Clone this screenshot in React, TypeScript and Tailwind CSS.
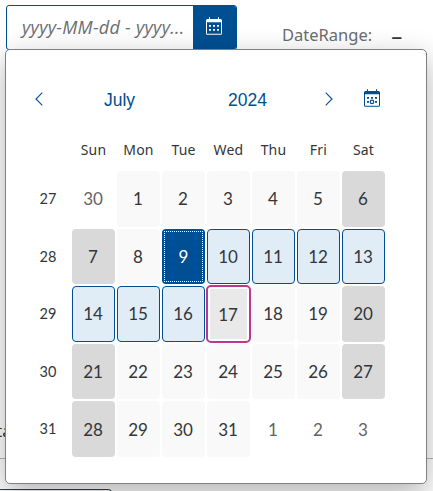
import React from "react";

const days = ["Sun", "Mon", "Tue", "Wed", "Thu", "Fri", "Sat"];
const weeks = [
  { no: 27, dates: [30, 1, 2, 3, 4, 5, 6] },
  { no: 28, dates: [7, 8, 9, 10, 11, 12, 13] },
  { no: 29, dates: [14, 15, 16, 17, 18, 19, 20] },
  { no: 30, dates: [21, 22, 23, 24, 25, 26, 27] },
  { no: 31, dates: [28, 29, 30, 31, 1, 2, 3] },
];

function DayCell({ date, week, col }: { date: number; week: number; col: number }) {
  const other = (week === 0 && date > 20) || (week === 4 && date < 10);
  const base = "flex items-center justify-center rounded-[4px] pr-px text-[17px] leading-none ";
  if (other) return <div className={base + "text-[#636363]"}>{date}</div>;
  if (date === 9)
    return (
      <div className="flex rounded-[4px] bg-[#004f93] p-[2px] text-[17px] leading-none text-white">
        <span className="flex flex-1 items-center justify-center border border-dotted border-white">9</span>
      </div>
    );
  if (date === 17)
    return (
      <div className="-m-px flex rounded-[5px] border-2 border-[#c0368c] bg-white p-[2px] text-[17px] leading-none">
        <span className="flex flex-1 items-center justify-center bg-[#e9e9e9] pt-[2px] pr-px">17</span>
      </div>
    );
  if (date > 9 && date < 17) return <div className={base + "border border-[#004f93] bg-[#e0edf7]"}>{date}</div>;
  return <div className={base + (col === 0 || col === 6 ? "bg-[#d9d9d9]" : "bg-[#f9f9f9]")}>{date}</div>;
}

function CalendarIcon({ today = false }: { today?: boolean }) {
  return (
    <svg width="16" height="18" viewBox="0 0 16 18" fill="currentColor">
      <path fillRule="evenodd" d="M1.500 2H3V.300h1V2h8V.300h1V2h1.500A1.500 1.500 0 0 1 16 3.500v13a1.300 1.300 0 0 1-1.300 1.300H1.300A1.300 1.300 0 0 1 0 16.500v-13A1.500 1.500 0 0 1 1.500 2M1 5.200V16.700H15V5.200Z" />
      <path d="M3 8h2v1.700H3zM7 8h2v1.700H7zM11 8h2v1.700h-2zM3 12h2v1.700H3zM11 12h2v1.700h-2z" />
      {today ? <circle cx="8" cy="12.900" r="1.700" fill="none" stroke="currentColor" strokeWidth="1.200" /> : <path d="M7 12h2v1.700H7z" />}
    </svg>
  );
}

function Chevron({ right = false }: { right?: boolean }) {
  return (
    <svg width="8" height="14" viewBox="0 0 8 14" fill="none" stroke="currentColor" strokeWidth="1.100">
      <path d={right ? "M.700 .600 7 7 .700 13.400" : "M7.300 .600 1 7l6.300 6.400"} />
    </svg>
  );
}

export default function App() {
  return (
    <main className="relative h-[491px] w-[433px] overflow-hidden bg-white font-['Lato','Liberation_Sans',sans-serif] text-[#32363a]">
      <div className="flex h-[50px] pt-[5px] pl-[6px]">
        <div className="flex h-[45px] w-[231px] overflow-hidden rounded-[3px] border border-[#004f93]">
          <div className="flex-1 pt-[9px] pl-[15px] font-['Open_Sans',sans-serif] text-[18px] leading-[24px] tracking-[0.280px] whitespace-nowrap text-[#6a6d70] italic">yyyy-MM-dd - yyyy...</div>
          <div className="flex w-[43px] items-center justify-center bg-[#004f93] pr-px pb-[3px] text-white"><CalendarIcon /></div>
        </div>
        <div className="ml-[45px] flex pt-[19px] font-['Noto_Sans',sans-serif] text-[16.500px] leading-[22px] text-[#6a6d70]">
          <span>DateRange:</span><span className="ml-[19px] text-[22px] text-[#32363a]">–</span>
        </div>
      </div>
      <div className="h-[409px] border-b border-[#b7b7b7] pt-[370px] font-['Noto_Sans',sans-serif] text-[17px] leading-[22px]"><span className="-ml-[4px]">ta</span></div>
      <div className="mt-[30px] h-[20px] w-[112px] rounded-tr-[4px] border-t border-r border-[#004f93] bg-white" />

      <section className="absolute top-[49px] left-[5px] h-[435px] w-[422px] rounded-[5px] border border-[#808080] bg-white shadow-[0_10px_30px_rgba(0,0,0,0.300)]">
        <header className="flex h-[88px] pt-[9px] font-['Liberation_Sans',sans-serif] text-[17.500px] text-[#004f93]">
          <div className="flex w-[65px] items-center justify-center"><Chevron /></div>
          <span className="flex w-[97px] items-center justify-center pt-[4px]">July</span>
          <span className="ml-[34px] flex w-[91px] items-center justify-center pt-[4px]">2024</span>
          <div className="ml-[18px] flex w-[36px] items-center justify-center"><Chevron right /></div>
          <div className="ml-[17px] flex items-center pb-px"><CalendarIcon today /></div>
        </header>
        <div className="ml-[66px] grid h-[33px] w-[313px] grid-cols-7 gap-x-[2px] font-['Noto_Sans',sans-serif] text-[14px] leading-[23px] tracking-[0.200px]">
          {days.map((d) => <span key={d} className="text-center">{d}</span>)}
        </div>
        <div className="flex flex-col gap-[2px]">
          {weeks.map((w, wi) => (
            <div key={w.no} className="flex h-[55.600px] pl-[18px]">
              <span className="flex w-[48px] items-center justify-center text-[14.500px]">{w.no}</span>
              <div className="grid w-[313px] grid-cols-7 gap-[2px]">
                {w.dates.map((d, i) => <DayCell key={i} date={d} week={wi} col={i} />)}
              </div>
            </div>
          ))}
        </div>
      </section>
    </main>
  );
}
